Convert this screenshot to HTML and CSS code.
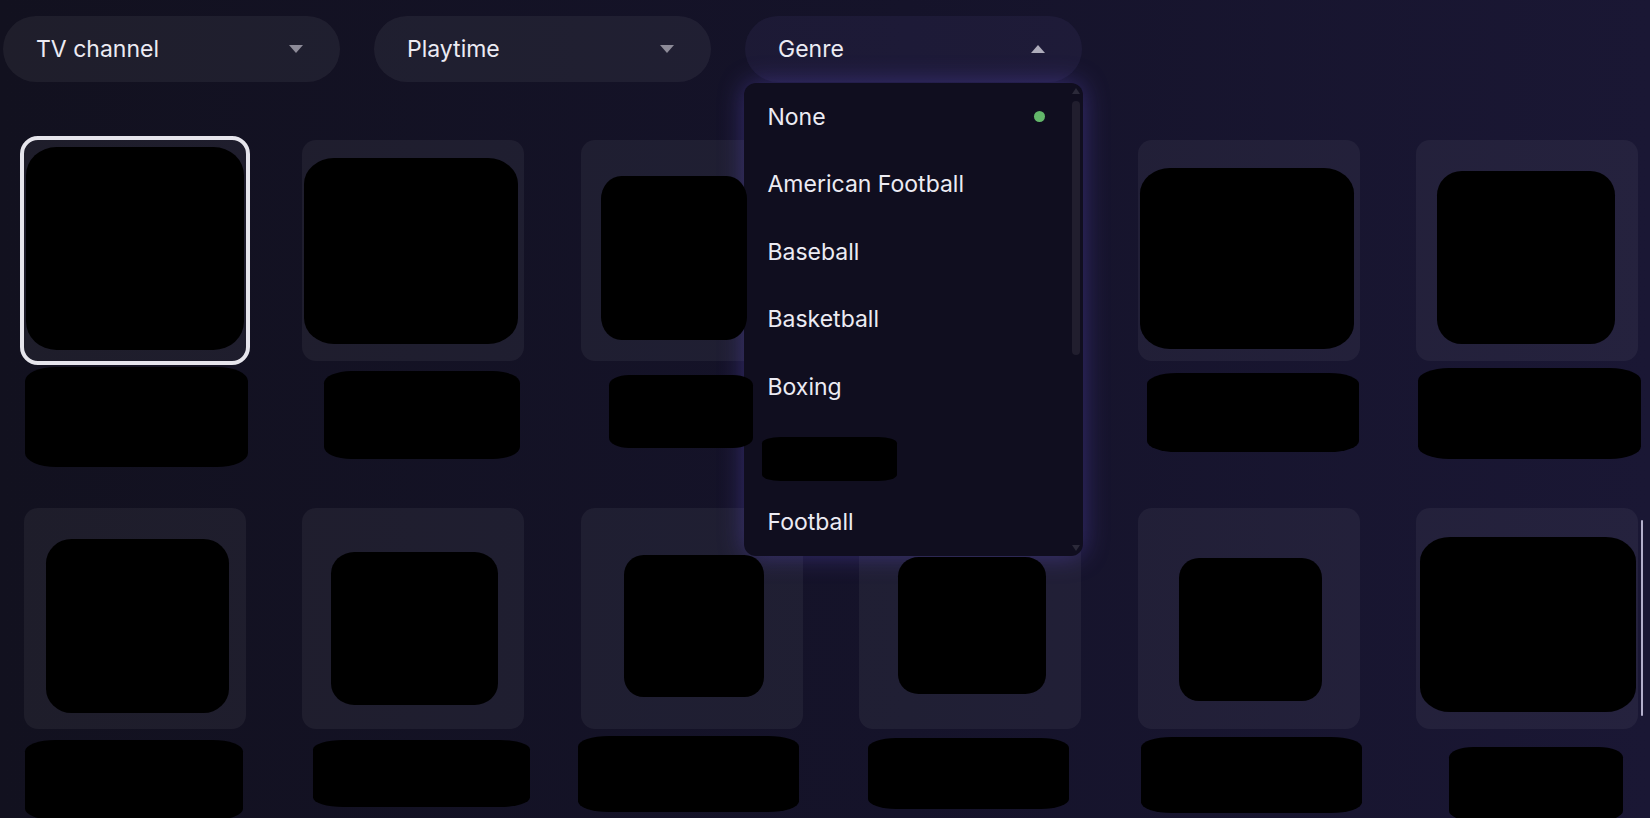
FILE: index.html
```html
<!DOCTYPE html>
<html lang="en">
<head>
    <meta charset="UTF-8">
    <meta name="viewport" content="width=device-width, initial-scale=1.0">
    <title>Browse</title>
    <link rel="stylesheet" href="styles.css">
</head>
<body>
    <div class="filters">
        <div class="select">
            <button class="select-btn">TV channel <span class="caret"></span></button>
        </div>
        <div class="select">
            <button class="select-btn">Playtime <span class="caret"></span></button>
        </div>
        <div class="select open">
            <button class="select-btn">Genre <span class="caret up"></span></button>
            <div class="dropdown">
                <ul class="options">
                    <li class="option selected">None <span class="dot"></span></li>
                    <li class="option">American Football</li>
                    <li class="option">Baseball</li>
                    <li class="option">Basketball</li>
                    <li class="option">Boxing</li>
                    <li class="option"><span class="redact" style="width:135px;height:44px;margin-left:-6px;margin-top:10px"></span></li>
                    <li class="option">Football</li>
                </ul>
                <div class="scrollbar">
                    <span class="sb-arrow"></span>
                    <span class="sb-thumb"></span>
                    <span class="sb-arrow down"></span>
                </div>
            </div>
        </div>
    </div>

    <!-- cover art and titles are blanked out in the source, sizes kept per item -->
    <div class="grid">
        <div class="tile">
            <div class="card active"><span class="redact" style="width:218px;height:203px;margin:7px 0 0 2px"></span></div>
            <div class="caption"><span class="redact" style="width:223px;height:100px;margin:6px 0 0 1px"></span></div>
        </div>
        <div class="tile">
            <div class="card"><span class="redact" style="width:214px;height:186px;margin:18px 0 0 2px"></span></div>
            <div class="caption"><span class="redact" style="width:196px;height:88px;margin:10px 0 0 22px"></span></div>
        </div>
        <div class="tile">
            <div class="card"><span class="redact" style="width:146px;height:164px;margin:36px 0 0 20px"></span></div>
            <div class="caption"><span class="redact" style="width:144px;height:73px;margin:14px 0 0 28px"></span></div>
        </div>
        <div class="tile">
            <div class="card"></div>
            <div class="caption"></div>
        </div>
        <div class="tile">
            <div class="card"><span class="redact" style="width:214px;height:181px;margin:28px 0 0 2px"></span></div>
            <div class="caption"><span class="redact" style="width:212px;height:79px;margin:12px 0 0 9px"></span></div>
        </div>
        <div class="tile">
            <div class="card"><span class="redact" style="width:178px;height:173px;margin:31px 0 0 21px"></span></div>
            <div class="caption"><span class="redact" style="width:223px;height:91px;margin:7px 0 0 2px"></span></div>
        </div>

        <div class="tile">
            <div class="card"><span class="redact" style="width:183px;height:174px;margin:31px 0 0 22px"></span></div>
            <div class="caption"><span class="redact" style="width:218px;height:80px;margin:11px 0 0 1px"></span></div>
        </div>
        <div class="tile">
            <div class="card"><span class="redact" style="width:167px;height:153px;margin:44px 0 0 29px"></span></div>
            <div class="caption"><span class="redact" style="width:217px;height:67px;margin:11px 0 0 11px"></span></div>
        </div>
        <div class="tile">
            <div class="card"><span class="redact" style="width:140px;height:142px;margin:47px 0 0 43px"></span></div>
            <div class="caption"><span class="redact" style="width:221px;height:76px;margin:7px 0 0 -3px"></span></div>
        </div>
        <div class="tile">
            <div class="card"><span class="redact" style="width:148px;height:137px;margin:49px 0 0 39px"></span></div>
            <div class="caption"><span class="redact" style="width:201px;height:71px;margin:9px 0 0 9px"></span></div>
        </div>
        <div class="tile">
            <div class="card"><span class="redact" style="width:143px;height:143px;margin:50px 0 0 41px"></span></div>
            <div class="caption"><span class="redact" style="width:221px;height:76px;margin:8px 0 0 3px"></span></div>
        </div>
        <div class="tile">
            <div class="card"><span class="redact" style="width:216px;height:175px;margin:29px 0 0 4px"></span></div>
            <div class="caption"><span class="redact" style="width:174px;height:74px;margin:18px 0 0 33px"></span></div>
        </div>
    </div>

    <div class="scroll-hint"></div>
</body>
</html>
```

FILE: styles.css
```css
html, body {
    height: 100%;
    overflow: hidden;
}

body {
    margin: 0;
    font-family: "Inter", "Noto Sans", sans-serif;
    color: #ecebf3;
    background: linear-gradient(to right, #12111f 0%, #15132a 55%, #1a1734 100%);
}

/* filter pills */
.filters {
    display: flex;
    gap: 34px;
    padding: 16px 0 0 3px;
}

.select {
    position: relative;
}

.select-btn {
    display: flex;
    align-items: center;
    justify-content: space-between;
    width: 337px;
    height: 66px;
    padding: 0 37px 0 33px;
    border: none;
    border-radius: 33px;
    background-color: rgba(255, 255, 255, 0.055);
    color: inherit;
    font: inherit;
    font-size: 23px;
    text-align: left;
}

.caret {
    width: 0;
    height: 0;
    border-left: 7px solid transparent;
    border-right: 7px solid transparent;
    border-top: 8px solid #8d8b98;
}

.caret.up {
    border-top: none;
    border-bottom: 8px solid #aeacbb;
}

.select.open .select-btn {
    background-color: rgba(140, 125, 220, 0.07);
}

/* genre list */
.dropdown {
    position: absolute;
    top: 67px;
    left: -1px;
    z-index: 20;
    width: 339px;
    height: 473px;
    overflow: hidden;
    border-radius: 12px;
    background-color: #100e1f;
    box-shadow: 0 0 26px rgba(95, 75, 200, 0.45);
}

.options {
    margin: 0;
    padding: 0 12px 0 0;
    list-style: none;
}

.option {
    display: flex;
    align-items: center;
    justify-content: space-between;
    height: 67.5px;
    padding: 0 26px 0 23.5px;
    font-size: 23px;
}

.dot {
    width: 11px;
    height: 11px;
    border-radius: 50%;
    background-color: #63b76a;
}

.scrollbar {
    position: absolute;
    top: 0;
    right: 0;
    bottom: 0;
    display: flex;
    flex-direction: column;
    align-items: center;
    width: 8px;
    padding: 5px 3px 5px 1px;
}

.sb-arrow {
    width: 0;
    height: 0;
    border-left: 4px solid transparent;
    border-right: 4px solid transparent;
    border-bottom: 6px solid #2b2939;
}

.sb-arrow.down {
    margin-top: auto;
    border-bottom: none;
    border-top: 6px solid #2b2939;
}

.sb-thumb {
    width: 8px;
    height: 254px;
    margin-top: 7px;
    border-radius: 4px;
    background-color: #211e2e;
}

/* grid of channels */
.grid {
    display: grid;
    grid-template-columns: repeat(6, 222px);
    grid-auto-rows: 368px;
    column-gap: 56.4px;
    margin-top: 58px;
    padding-left: 24px;
}

.card {
    display: flex;
    flex-direction: column;
    align-items: flex-start;
    height: 221px;
    border-radius: 14px;
    background-color: rgba(255, 255, 255, 0.05);
}

.card.active {
    outline: 4px solid #e6e5ec;
}

.caption {
    display: flex;
    flex-direction: column;
    align-items: flex-start;
}

.redact {
    position: relative;
    z-index: 30;
    display: block;
    flex-shrink: 0;
    background-color: #000;
    border-radius: 14%;
}

.scroll-hint {
    position: fixed;
    top: 520px;
    left: 1641px;
    width: 2px;
    height: 196px;
    border-radius: 1px;
    background-color: #b4b0cc;
}
```
